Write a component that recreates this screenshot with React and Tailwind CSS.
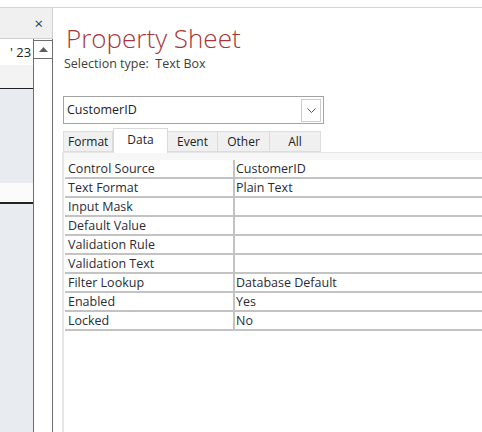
import React from "react";

const rows = [
  ["Control Source", "CustomerID"],
  ["Text Format", "Plain Text"],
  ["Input Mask", ""],
  ["Default Value", ""],
  ["Validation Rule", ""],
  ["Validation Text", ""],
  ["Filter Lookup", "Database Default"],
  ["Enabled", "Yes"],
  ["Locked", "No"],
];

const tabs = [
  { label: "Format", w: "w-[50px]", align: "justify-start pl-[4px]" },
  { label: "Data", w: "w-[55px]", active: true },
  { label: "Event", w: "w-[50px]" },
  { label: "Other", w: "w-[52px]" },
  { label: "All", w: "w-[51px]" },
];

function LeftPanel() {
  return (
    <div className="flex w-[53px] shrink-0 flex-col">
      {/* pane header with close button */}
      <div className="flex h-[31px] items-center justify-end border-b border-r border-[#cfcfcf] bg-[#f0f0f0] pr-[9px]">
        <span className="text-[15px] leading-none text-[#3a3a3a]">×</span>
      </div>
      <div className="flex flex-1">
        <div className="flex w-[33px] flex-col">
          <div className="relative h-[26px] bg-white">
            <span className="absolute left-[10px] top-[4px] text-[13px] text-[#222]">' 23</span>
          </div>
          <div className="h-[24px] border-b border-[#222] bg-[#f3f3f3]"></div>
          <div className="h-[94px] bg-[#e8ebef]"></div>
          <div className="h-[21px] border-b-2 border-[#222] bg-[#fbfbfb]"></div>
          <div className="flex-1 bg-[#e8ebef]"></div>
        </div>
        {/* vertical scrollbar */}
        <div className="flex w-[20px] flex-col border-x border-[#6d6d6d] bg-white">
          <div className="mt-[1px] flex h-[19px] items-center justify-center border-y border-[#6d6d6d]">
            <svg width="9" height="5" viewBox="0 0 9 5">
              <path d="M0 5 L4.5 0 L9 5 Z" fill="#606060" />
            </svg>
          </div>
        </div>
      </div>
    </div>
  );
}

function PropertySheet() {
  return (
    <div className="flex flex-1 flex-col pl-[9px]">
      <div className="pl-[4px] pt-[12px] text-[26px] font-light leading-[36px] text-[#a4373a]">
        Property Sheet
      </div>
      <div className="pl-[2px] text-[12.5px] leading-[16px] text-[#404040]">
        Selection type:&nbsp; Text Box
      </div>
      <div className="ml-[1px] mt-[24px] flex h-[28px] w-[261px] items-center border border-[#a3a3a3] bg-white pl-[3px] pr-[2px]">
        <span className="flex-1 text-[12.5px] text-[#222]">CustomerID</span>
        <div className="flex h-[23px] w-[20px] items-center justify-center border border-[#cccccc]">
          <svg width="9" height="5" viewBox="0 0 9 5">
            <path d="M0.5 0.5 L4.5 4.5 L8.5 0.5" fill="none" stroke="#555" strokeWidth="1" />
          </svg>
        </div>
      </div>
      <div className="ml-[1px] mt-[4px] flex h-[24px] items-end">
        {tabs.map((t) =>
          t.active ? (
            <div
              key={t.label}
              className={`${t.w} -mb-px z-10 flex h-[25px] items-center justify-center border border-b-0 border-[#d9d9d9] bg-white pb-[3px] text-[12px] text-[#222]`}
            >
              {t.label}
            </div>
          ) : (
            <div
              key={t.label}
              className={`${t.w} flex h-[21px] items-center ${t.align || "justify-center"} border border-l-0 border-[#dcdcdc] bg-[#f0f0f0] text-[12px] text-[#222] first:border-l`}
            >
              {t.label}
            </div>
          )
        )}
      </div>
      <div className="flex-1 border-l-2 border-t border-[#e6e6e6] bg-white">
        <div className="h-[7px] bg-[#f7f7f7]"></div>
        <div className="pl-[1px]">
          {rows.map(([k, v]) => (
            <div key={k} className="flex h-[19px] border-b-2 border-[#c3c3c3] text-[12.5px] leading-[17px] text-[#2b2b38]">
              <div className="w-[170px] shrink-0 border-r-2 border-[#c3c3c3] pl-[3px]">{k}</div>
              <div className="flex-1 pl-[1px]">{v}</div>
            </div>
          ))}
        </div>
      </div>
    </div>
  );
}

export default function App() {
  return (
    <div
      className="flex h-[432px] w-[482px] flex-col overflow-hidden bg-white"
      style={{ fontFamily: '"Open Sans", "Noto Sans", sans-serif' }}
    >
      <div className="relative h-[8px] shrink-0 overflow-hidden border-b border-[#d4d4d4]">
        <span className="absolute left-[228px] top-[-12px] text-[12px] leading-[14px] text-[#333]">Tools</span>
      </div>
      <div className="flex flex-1">
        <LeftPanel />
        <PropertySheet />
      </div>
    </div>
  );
}
